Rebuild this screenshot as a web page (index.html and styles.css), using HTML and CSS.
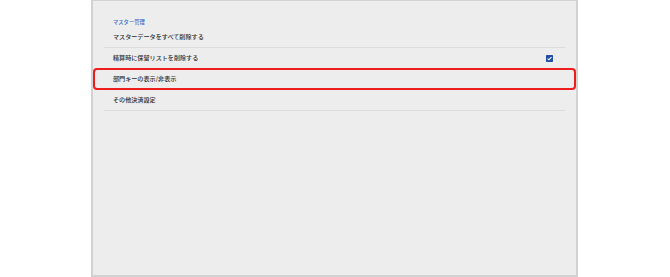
FILE: index.html
```html
<!DOCTYPE html>
<html lang="ja">
<head>
<meta charset="utf-8">
<link rel="stylesheet" href="styles.css">
</head>
<body>
<div class="frame">
  <div class="section">
    <div class="section-title">マスター管理</div>
    <ul class="list">
      <li class="row"><span class="label">マスターデータをすべて削除する</span></li>
      <li class="row"><span class="label">精算時に保留リストを削除する</span>
        <svg class="check" viewBox="0 0 7 7" width="7" height="7"><rect width="7" height="7" rx="0.8" fill="#1f4ea3"/><path d="M1.6 3.6 L2.9 4.8 L5.5 2.1" fill="none" stroke="#fff" stroke-width="1.1"/></svg>
      </li>
      <li class="row highlighted"><span class="label">部門キーの表示/非表示</span></li>
      <li class="row"><span class="label">その他決済設定</span></li>
    </ul>
  </div>
</div>
</body>
</html>
```
FILE: styles.css
```css
html, body {
  margin: 0;
  padding: 0;
  background: #ffffff;
}
body {
  font-family: "Noto Sans CJK JP", "Noto Sans", sans-serif;
  color: #2e2e2e;
}
.frame {
  box-sizing: border-box;
  margin-left: 91px;
  width: 487px;
  height: 277px;
  background: #ededed;
  border: 2px solid #d2d2d2;
  border-top-width: 1px;
  position: relative;
}
.section {
  padding: 16px 11px 0 11px;
}
.section-title {
  height: 10px;
  line-height: 10px;
  font-size: 5.3px;
  font-weight: 500;
  color: #3b6fc9;
  padding-left: 9px;
}
.list {
  list-style: none;
  margin: 0;
  padding: 0;
}
.row {
  display: flex;
  align-items: center;
  justify-content: space-between;
  height: 20px;
  border-bottom: 1px solid #dcdcdc;
  padding: 0 12px 0 9px;
  font-size: 6.1px;
  font-weight: 500;
}
.label {
  line-height: 10px;
}
.check {
  display: block;
}
.highlighted {
  position: relative;
}
.highlighted::after {
  content: "";
  position: absolute;
  left: -11px;
  right: -11px;
  top: -1px;
  bottom: -1px;
  border: 2px solid #ee1c1c;
  border-radius: 4px;
  box-sizing: border-box;
}
```
